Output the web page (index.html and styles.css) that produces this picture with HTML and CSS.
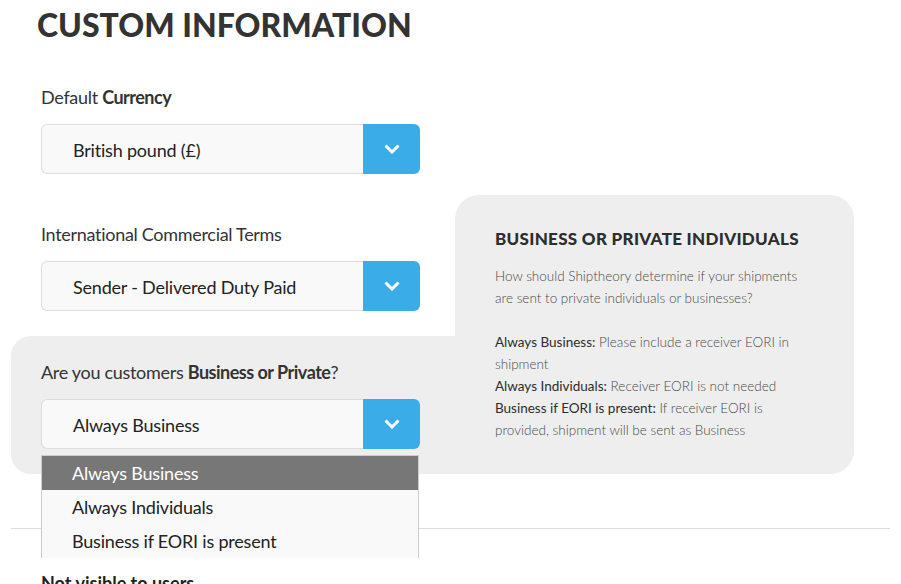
FILE: index.html
```html
<!DOCTYPE html>
<html lang="en">
<head>
<meta charset="utf-8">
<title>Custom Information</title>
<link rel="stylesheet" href="styles.css">
</head>
<body>
<div class="page">
  <h1 class="title">CUSTOM INFORMATION</h1>

  <div class="fields">
    <div class="field">
      <div class="label">Default <b>Currency</b></div>
      <div class="select">
        <div class="select-value">British pound (£)</div>
        <div class="select-btn">
          <svg class="chev" width="16" height="10" viewBox="0 0 16 10"><path d="M1.5 1.5 L8 8 L14.5 1.5" fill="none" stroke="#fff" stroke-width="3"/></svg>
        </div>
      </div>
    </div>

    <div class="field">
      <div class="label">International Commercial Terms</div>
      <div class="select">
        <div class="select-value">Sender - Delivered Duty Paid</div>
        <div class="select-btn">
          <svg class="chev" width="16" height="10" viewBox="0 0 16 10"><path d="M1.5 1.5 L8 8 L14.5 1.5" fill="none" stroke="#fff" stroke-width="3"/></svg>
        </div>
      </div>
    </div>

    <div class="field field-active">
      <div class="info-card">
        <div class="info-title">BUSINESS OR PRIVATE INDIVIDUALS</div>
        <div class="info-body">
          <p>How should Shiptheory determine if your shipments<br>are sent to private individuals or businesses?</p>
          <p><span class="em">Always Business:</span> Please include a receiver EORI in<br>shipment<br><span class="em">Always Individuals:</span> Receiver EORI is not needed<br><span class="em">Business if EORI is present:</span> If receiver EORI is<br>provided, shipment will be sent as Business</p>
        </div>
      </div>
      <div class="label">Are you customers <b>Business or Private</b>?</div>
      <div class="select-wrap">
        <div class="select">
          <div class="select-value">Always Business</div>
          <div class="select-btn">
            <svg class="chev" width="16" height="10" viewBox="0 0 16 10"><path d="M1.5 1.5 L8 8 L14.5 1.5" fill="none" stroke="#fff" stroke-width="3"/></svg>
          </div>
        </div>
        <ul class="menu">
          <li class="menu-item is-selected">Always Business</li>
          <li class="menu-item">Always Individuals</li>
          <li class="menu-item">Business if EORI is present</li>
        </ul>
      </div>
    </div>
  </div>

  <hr class="divider">
  <div class="subhead">Not visible to users</div>
</div>
</body>
</html>
```

FILE: styles.css
```css
html, body {
  margin: 0;
  padding: 0;
  overflow: hidden;
  background: #fff;
}
body {
  font-family: Lato, "Liberation Sans", sans-serif;
  color: #333;
}
.page {
  width: 901px;
}
.title {
  margin: 5px 0 17px 37px;
  font-family: Lato, sans-serif;
  font-weight: 900;
  font-size: 32px;
  line-height: 40px;
  color: #333;
  letter-spacing: 0;
}
.fields {
  margin-left: 11px;
  width: 843px;
}
.field {
  position: relative;
  padding: 23px 30px 25px;
}
.field-active {
  padding-top: 24px;
  background: #eeeeee;
  border-radius: 20px 24px 24px 20px;
}
.label {
  font-size: 18px;
  letter-spacing: -0.3px;
  line-height: 24px;
  color: #333;
  margin-bottom: 15px;
}
.label b {
  font-weight: 700;
  letter-spacing: -0.5px;
}
.select-wrap {
  position: relative;
  width: 379px;
}
.select {
  display: flex;
  width: 379px;
  height: 50px;
}
.select-value {
  flex: 1;
  box-sizing: border-box;
  border: 1px solid #dddddd;
  border-right: none;
  border-radius: 6px 0 0 6px;
  background: #f9f9f9;
  padding: 3px 0 0 31px;
  font-size: 18px;
  letter-spacing: -0.2px;
  line-height: 45px;
  color: #222;
}
.select-btn {
  width: 57px;
  background: #3aace8;
  border-radius: 0 6px 6px 0;
  display: flex;
  align-items: center;
  justify-content: center;
}
.chev {
  display: block;
}
.menu {
  position: absolute;
  z-index: 5;
  left: 0;
  top: 56px;
  width: 378px;
  box-sizing: border-box;
  margin: 0;
  padding: 0;
  list-style: none;
  background: #f9f9f9;
  border: 1px solid #cccccc;
  border-bottom: none;
}
.menu-item {
  height: 34px;
  line-height: 34px;
  padding-left: 30px;
  font-size: 18px;
  letter-spacing: -0.2px;
  color: #222;
}
.menu-item.is-selected {
  background: #777777;
  color: #fff;
}
.info-card {
  position: absolute;
  right: 0;
  bottom: 0;
  width: 399px;
  height: 279px;
  box-sizing: border-box;
  padding: 34px 30px 0 40px;
  background: #eeeeee;
  border-radius: 24px;
}
.info-title {
  font-weight: 900;
  font-size: 17px;
  letter-spacing: 0.3px;
  line-height: 20px;
  color: #2d2d2d;
  margin-bottom: 16px;
}
.info-body {
  font-size: 13.5px;
  line-height: 22px;
  font-weight: 300;
  color: #4a4a4a;
}
.info-body p {
  margin: 0 0 22px;
  white-space: nowrap;
}
.info-body .em {
  font-weight: 400;
  color: #2d2d2d;
}
.divider {
  margin: 54px 0 0 11px;
  width: 879px;
  height: 0;
  border: none;
  border-top: 1px solid #dddddd;
}
.subhead {
  margin: 42px 0 0 41px;
  font-size: 18px;
  font-weight: 700;
  line-height: 24px;
  color: #222;
}
```
